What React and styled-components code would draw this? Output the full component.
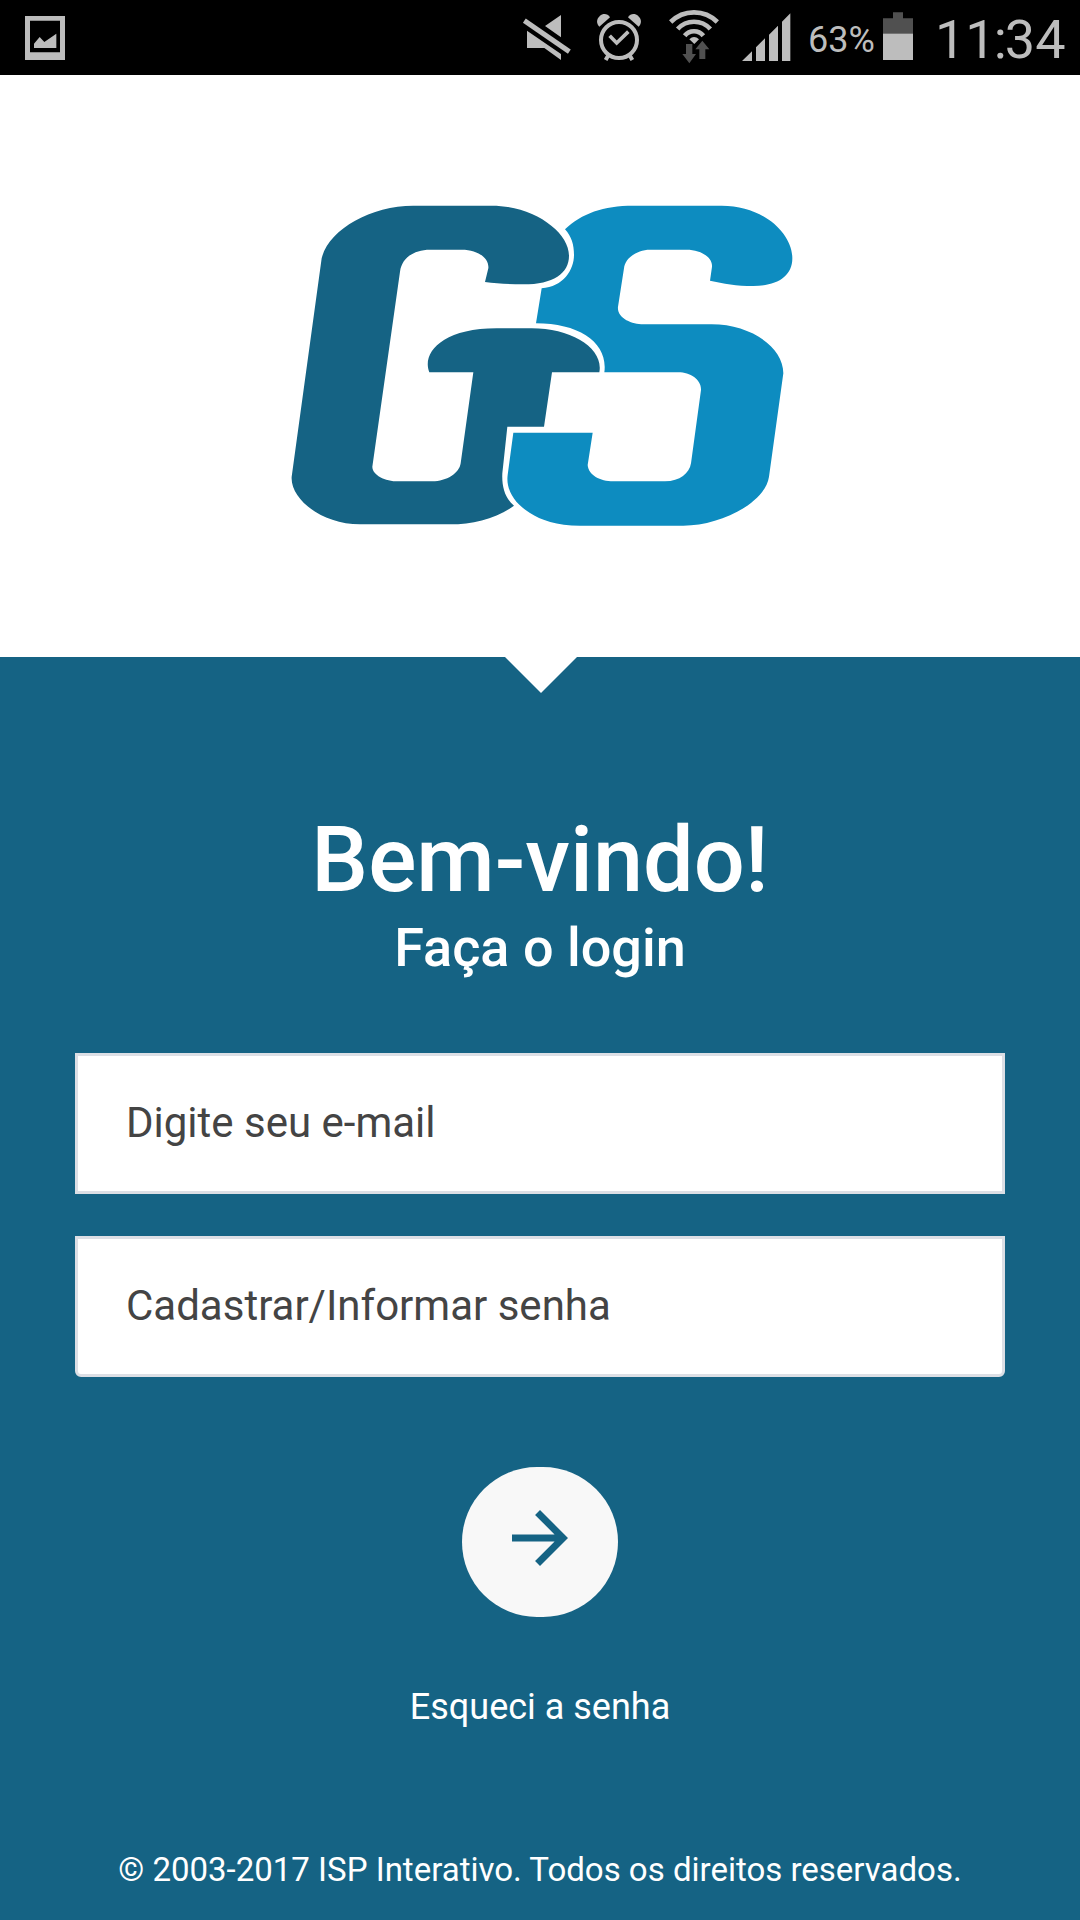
import React, { useState } from 'react';
import styled, { createGlobalStyle } from 'styled-components';
import { MdArrowForward } from 'react-icons/md';

const GlobalStyle = createGlobalStyle`
    * {
        box-sizing: border-box;
    }

    body {
        margin: 0;
        background: #156384;
        font-family: Roboto, "Liberation Sans", sans-serif;
    }
`

const StatusIcon = ({ x, width, gap, children }) => (
    <IconSvg $gap={gap} width={width} height="75" viewBox={`${x} 0 ${width * 3} 225`}>
        {children}
    </IconSvg>
)

const StatusBar = () => (
    <Bar>
        <StatusIcon x={75} width={40}>
            <path fillRule="evenodd" d="M75 48H195V180H75ZM90 62V157H180V62Z" />
            <path d="M102 144V131L119 111L133 126L169 101V144Z" />
        </StatusIcon>
        <BarGroup>
            <StatusIcon x={66} width={50}>
                <path d="M135 78L183 45V112ZM81 92L183 162V180L133 144H81Z" />
                <path d="M73 62L208 155" stroke="#bdbdbd" strokeWidth="15" />
            </StatusIcon>
            <StatusIcon x={288} width={46} gap={24}>
                <path d="M298 80L330 52C323 39 308 40 300 47C288 58 289 70 298 80Z" />
                <path d="M416 80L384 52C391 39 406 40 414 47C426 58 425 70 416 80Z" />
                <g fill="none" stroke="#bdbdbd">
                    <circle cx="357" cy="120" r="54" strokeWidth="12" />
                    <path d="M329 107L350 129L385 95" strokeWidth="11" />
                    <path d="M325 166L317 180M389 166L397 180" strokeWidth="12" />
                </g>
            </StatusIcon>
            <StatusIcon x={504} width={52} gap={26}>
                <g fill="none" stroke="#bdbdbd" strokeWidth="14">
                    <path d="M512 66A99 99 0 0 1 652 66" />
                    <path d="M533 87A66 66 0 0 1 631 87" />
                    <path d="M554 107A36 36 0 0 1 610 107" />
                </g>
                <path d="M568 118Q582 104 597 118L583 132Z" />
                <path fill="#505050" d="M558 132H577V162H588L568 190L547 162H558ZM607 122L628 148H616V177H598V148H586Z" />
            </StatusIcon>
            <StatusIcon x={723} width={51} gap={21}>
                <path d="M726 183L756 154V183ZM768 183V142L795 115V183ZM807 183V104L834 77V183ZM846 183V65L871 40V183Z" />
            </StatusIcon>
            <Percent>63%</Percent>
            <StatusIcon x={279} width={30} gap={9}>
                <path fill="#505050" d="M309 37H339V55H369V102H279V55H309Z" />
                <path d="M279 101H369V180H279Z" />
            </StatusIcon>
            <Clock>11<Colon>:</Colon>34</Clock>
        </BarGroup>
    </Bar>
)

const Logo = () => (
    <svg width="540" height="350" viewBox="0 0 1620 1050">
        <path
            fill="#156384"
            d="M430 47H665C790 47 897 125 897 197C897 250 850 283 760 283C715 283 680 281 645 276L655 235C658 205 625 179 575 179H480C430 179 395 205 390 245L307 830C307 855 345 874 385 874H487C530 874 568 850 572 820L610 547H478C455 490 515 415 680 415H785C905 415 1002 475 988 547H846L822 710H712L697 850C695 890 705 925 732 947C680 985 610 1003 540 1003H270C160 1003 60 930 65 860L155 205C175 120 300 47 430 47Z"
        />
        <path
            fill="#0d8cc0"
            d="M885 118C935 70 1000 47 1090 47H1355C1480 47 1567 130 1567 205C1567 260 1520 288 1450 288C1400 288 1360 281 1320 272L1326 230C1328 200 1290 179 1250 179H1140C1100 179 1065 205 1062 235L1044 350C1040 385 1085 403 1120 403H1325C1440 403 1540 470 1540 550L1497 860C1485 940 1350 1007 1240 1007H930C860 1007 812 990 780 969C735 942 707 900 713 855L730 728H968L953 825C955 855 990 874 1030 874H1185C1230 874 1258 850 1263 820L1293 600C1295 570 1262 547 1225 547H1003C1015 460 930 400 798 400L815 295C880 290 912 240 912 195C912 165 905 140 885 118Z"
        />
    </svg>
)

const App = () => {

    const [ input, setInput ] = useState({
        email: "",
        password: ""
    })

    const handleChange = (event) => {
        const { name, value } = event.target
        setInput((state) => ({...state, [name]: value}))
    }

    const handleSubmit = (e) => {
        e.preventDefault()
    }

    return (
        <Screen>
            <GlobalStyle />
            <StatusBar />
            <Header>
                <Logo />
            </Header>
            <Panel>
                <Title>Bem-vindo!</Title>
                <Subtitle>Faça o login</Subtitle>
                <Form onSubmit={handleSubmit}>
                    <Field
                    type="email"
                    name="email"
                    placeholder="Digite seu e-mail"
                    value={input.email}
                    onChange={handleChange}
                    />
                    <Field
                    type="password"
                    name="password"
                    placeholder="Cadastrar/Informar senha"
                    value={input.password}
                    onChange={handleChange}
                    $last
                    />
                    <Submit type="submit" aria-label="Entrar">
                        <MdArrowForward />
                    </Submit>
                </Form>
                <Forgot href="#">Esqueci a senha</Forgot>
                <Copyright>© 2003-2017 ISP Interativo. Todos os direitos reservados.</Copyright>
            </Panel>
        </Screen>
    )
}

const Screen = styled.main`
    display: flex;
    flex-direction: column;
    width: 1080px;
    height: 1920px;
    overflow: hidden;
`

const Bar = styled.div`
    display: flex;
    justify-content: space-between;
    height: 75px;
    padding-left: 25px;
    background: #000;
    color: #bdbdbd;
`

const BarGroup = styled.div`
    display: flex;
    width: 558px;
`

const IconSvg = styled.svg`
    flex: none;
    margin-left: ${({$gap}) => $gap || 0}px;
    fill: #bdbdbd;
`

const Percent = styled.span`
    width: 66px;
    margin-left: 16px;
    padding-top: 19px;
    font-size: 36px;
    line-height: 42px;
    white-space: nowrap;
`

const Clock = styled.span`
    margin-left: 22px;
    padding-top: 8px;
    font-size: 54px;
    line-height: 64px;
    white-space: nowrap;
`

const Colon = styled.span`
    margin: 0 -2px;
`

const Header = styled.header`
    position: relative;
    display: flex;
    justify-content: center;
    height: 582px;
    padding-top: 115px;
    background: #fff;

    &::after {
        content: "";
        position: absolute;
        top: 100%;
        left: 505px;
        border: 36px solid transparent;
        border-top-color: #fff;
        border-bottom: 0;
    }
`

const Panel = styled.section`
    display: flex;
    flex: 1;
    flex-direction: column;
    align-items: center;
    padding-top: 152px;
    background: #156384;
    color: #fff;
`

const Title = styled.h1`
    margin: 0;
    font-size: 90px;
    font-weight: 500;
    line-height: 104px;
`

const Subtitle = styled.h2`
    margin: 2px 0 0;
    font-size: 54px;
    font-weight: 500;
    line-height: 66px;
`

const Form = styled.form`
    display: flex;
    flex-direction: column;
    align-items: center;
    gap: 42px;
    margin-top: 72px;
`

const Field = styled.input`
    width: 930px;
    height: 141px;
    padding: 0 48px 3px;
    border: 3px solid #dcdfe5;
    border-radius: ${({$last}) => ($last ? '0 0 6px 6px' : '0')};
    background: #fff;
    color: #444;
    font-family: inherit;
    font-size: 42px;
    outline: none;

    &::placeholder {
        color: #444;
        opacity: 1;
    }
`

const Submit = styled.button`
    display: flex;
    align-items: center;
    justify-content: center;
    width: 156px;
    height: 150px;
    margin-top: 48px;
    padding: 0 0 9px;
    border: none;
    border-radius: 75px;
    background: #f8f8f8;
    color: #156384;
    font-size: 84px;
    cursor: pointer;
`

const Forgot = styled.a`
    margin-top: 68px;
    color: #fff;
    font-size: 36px;
    line-height: 44px;
    text-decoration: none;
`

const Copyright = styled.p`
    margin: 121px 0 0;
    font-size: 33px;
    line-height: 40px;
`

export default App;
